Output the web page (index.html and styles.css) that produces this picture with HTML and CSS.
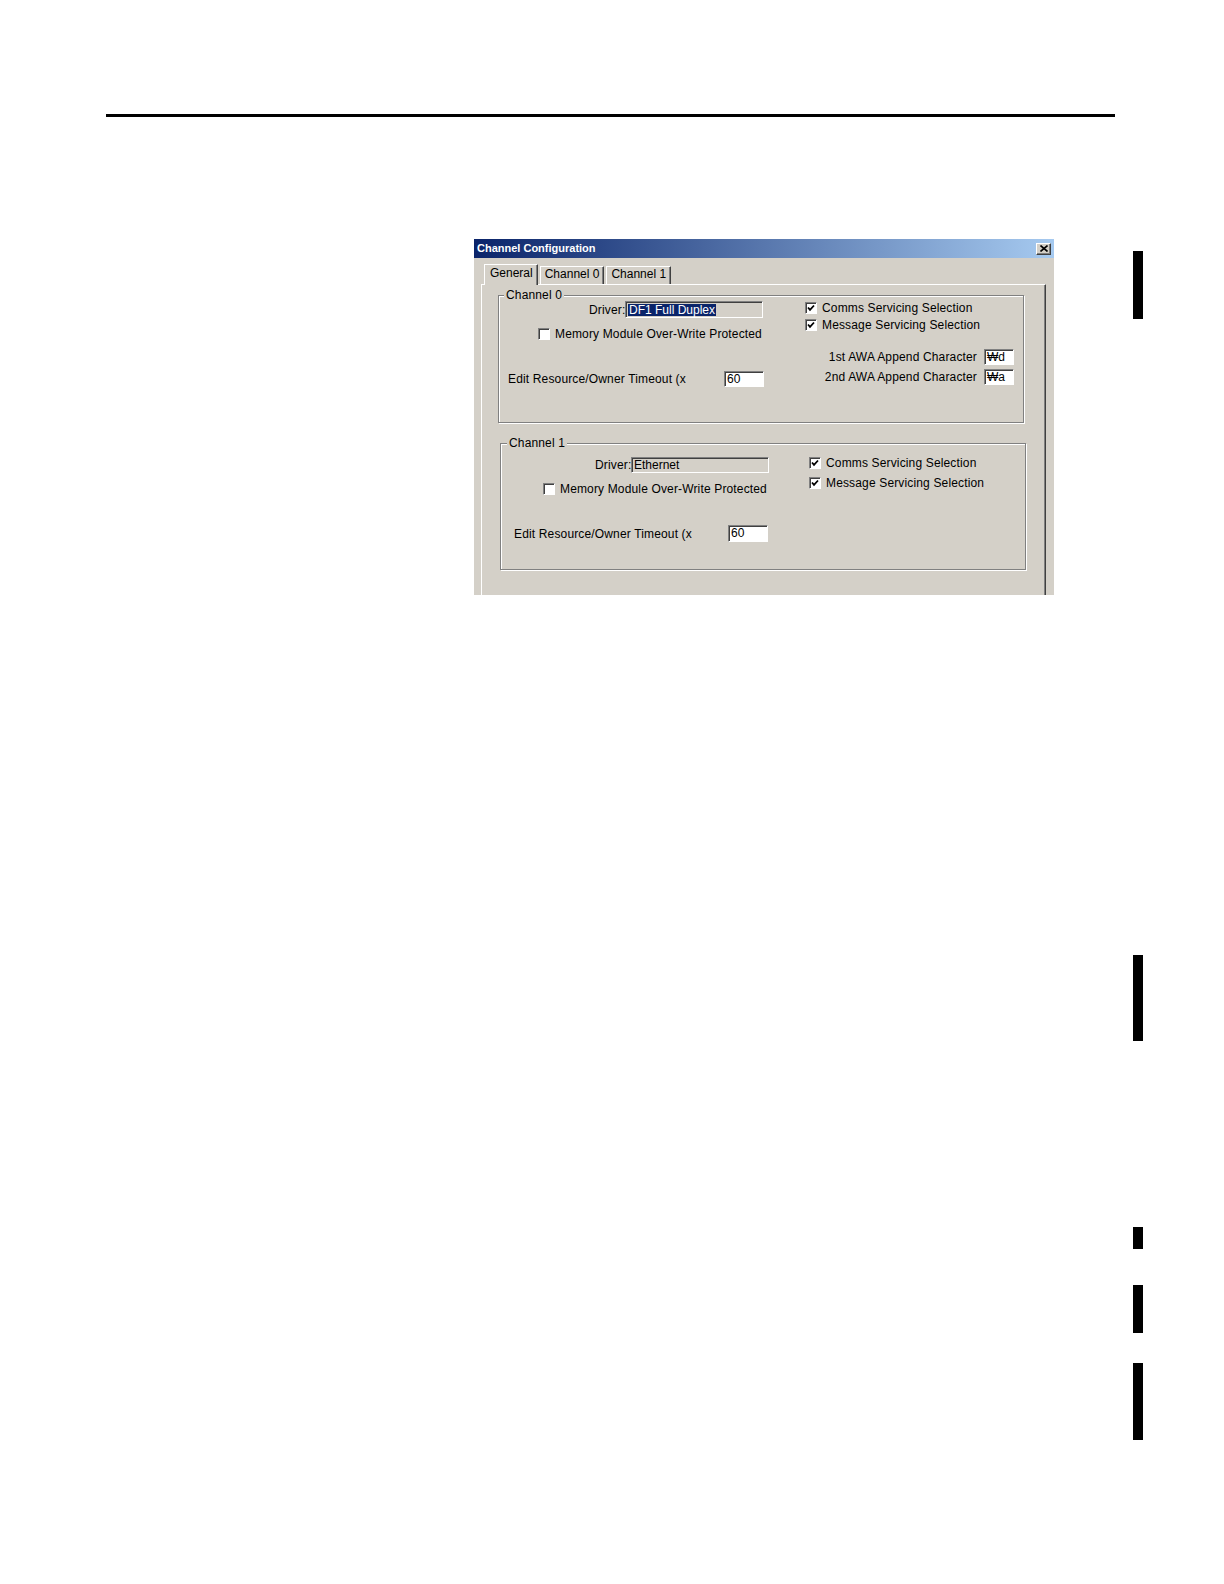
FILE: index.html
```html
<!DOCTYPE html>
<html>
<head>
<meta charset="utf-8">
<title>Channel Configuration</title>
<link rel="stylesheet" href="styles.css">
</head>
<body>
<div class="page">
  <div class="main">
    <div class="rule"></div>
    <div class="figure">
      <div class="dialog">
        <div class="titlebar">
          <span class="title">Channel Configuration</span>
          <span class="close-btn">
            <svg width="8" height="7" viewBox="0 0 8 7"><path d="M0.5 0.5 L7.5 6.5 M7.5 0.5 L0.5 6.5" stroke="#000" stroke-width="1.6" fill="none"/></svg>
          </span>
        </div>
        <div class="dialog-body">
          <div class="tabs">
            <div class="tab tab-active">General</div>
            <div class="tab tab-ch0">Channel 0</div>
            <div class="tab tab-ch1">Channel 1</div>
          </div>
          <div class="panel">
            <div class="group group-ch0">
              <span class="group-label">Channel 0</span>
              <div class="group-grid">
                <div class="col-left">
                  <div class="row driver-row">
                    <span class="lbl">Driver:</span>
                    <span class="field field-driver field-disabled"><span class="sel">DF1 Full Duplex</span></span>
                  </div>
                  <div class="row mem-row">
                    <span class="chk"></span>
                    <span class="chk-text">Memory Module Over-Write Protected</span>
                  </div>
                  <div class="row edit-row">
                    <span class="edit-lbl">Edit Resource/Owner Timeout (x</span>
                    <span class="field field-timeout">60</span>
                  </div>
                </div>
                <div class="col-right">
                  <div class="row comms-row">
                    <span class="chk"><svg width="8" height="8" viewBox="0 0 8 8"><path d="M1 3.5 L3 5.8 L7 1.5" stroke="#000" stroke-width="1.8" fill="none"/></svg></span>
                    <span class="chk-text">Comms Servicing Selection</span>
                  </div>
                  <div class="row msg-row">
                    <span class="chk"><svg width="8" height="8" viewBox="0 0 8 8"><path d="M1 3.5 L3 5.8 L7 1.5" stroke="#000" stroke-width="1.8" fill="none"/></svg></span>
                    <span class="chk-text">Message Servicing Selection</span>
                  </div>
                  <div class="row awa-row awa-1">
                    <span class="awa-lbl">1st AWA Append Character</span>
                    <span class="field field-awa">₩d</span>
                  </div>
                  <div class="row awa-row awa-2">
                    <span class="awa-lbl">2nd AWA Append Character</span>
                    <span class="field field-awa">₩a</span>
                  </div>
                </div>
              </div>
            </div>
            <div class="group group-ch1">
              <span class="group-label">Channel 1</span>
              <div class="group-grid">
                <div class="col-left">
                  <div class="row driver-row">
                    <span class="lbl">Driver:</span>
                    <span class="field field-driver field-disabled">Ethernet</span>
                  </div>
                  <div class="row mem-row">
                    <span class="chk"></span>
                    <span class="chk-text">Memory Module Over-Write Protected</span>
                  </div>
                  <div class="row edit-row">
                    <span class="edit-lbl">Edit Resource/Owner Timeout (x</span>
                    <span class="field field-timeout">60</span>
                  </div>
                </div>
                <div class="col-right">
                  <div class="row comms-row">
                    <span class="chk"><svg width="8" height="8" viewBox="0 0 8 8"><path d="M1 3.5 L3 5.8 L7 1.5" stroke="#000" stroke-width="1.8" fill="none"/></svg></span>
                    <span class="chk-text">Comms Servicing Selection</span>
                  </div>
                  <div class="row msg-row">
                    <span class="chk"><svg width="8" height="8" viewBox="0 0 8 8"><path d="M1 3.5 L3 5.8 L7 1.5" stroke="#000" stroke-width="1.8" fill="none"/></svg></span>
                    <span class="chk-text">Message Servicing Selection</span>
                  </div>
                </div>
              </div>
            </div>
          </div>
        </div>
      </div>
    </div>
  </div>
  <div class="thumbs">
    <div class="thumb thumb-1"></div>
    <div class="thumb thumb-2"></div>
    <div class="thumb thumb-3"></div>
    <div class="thumb thumb-4"></div>
    <div class="thumb thumb-5"></div>
  </div>
</div>
</body>
</html>
```

FILE: styles.css
```css
* { box-sizing: border-box; }

body {
  margin: 0;
  background: #fff;
}

.page {
  display: grid;
  grid-template-columns: 1133px 10px;
  width: 1224px;
  min-height: 1584px;
  font-family: "Liberation Sans", Arial, "DejaVu Sans", sans-serif;
}

.main { padding-top: 114px; }

.rule {
  margin-left: 106px;
  width: 1009px;
  height: 3px;
  background: #000;
}

.figure {
  margin: 122px 0 0 474px;
  width: 580px;
}

.dialog {
  width: 580px;
  height: 356px;
  background: #d4d0c8;
  overflow: hidden;
  font-size: 12px;
  letter-spacing: 0.15px;
  color: #000;
}

.titlebar {
  height: 19px;
  display: flex;
  align-items: center;
  justify-content: space-between;
  padding: 0 3px 0 3px;
  background: linear-gradient(to right, #0a246a, #a6caf0);
}

.title {
  color: #fff;
  font-weight: bold;
  font-size: 11px;
  letter-spacing: 0;
  line-height: 19px;
}

.close-btn {
  width: 15px;
  height: 12px;
  background: #d4d0c8;
  border-top: 1px solid #fff;
  border-left: 1px solid #fff;
  border-right: 1px solid #404040;
  border-bottom: 1px solid #404040;
  box-shadow: inset -1px -1px 0 #808080;
  display: flex;
  align-items: center;
  justify-content: center;
}

.dialog-body { padding: 6px 8px 0 7px; }

.tabs {
  display: flex;
  align-items: flex-end;
  height: 20px;
  padding-left: 3px;
  position: relative;
  z-index: 1;
}

.tab {
  height: 18px;
  line-height: 15px;
  padding: 0 4px;
  border-top: 1px solid #fff;
  border-left: 1px solid #fff;
  border-right: 1px solid #404040;
  box-shadow: inset -1px 0 0 #808080;
  background: #d4d0c8;
  white-space: nowrap;
  letter-spacing: 0;
}

.tab-active {
  height: 21px;
  margin-bottom: -1px;
  padding: 0 4px 0 5px;
  line-height: 17px;
}

.tab-ch0 { margin-left: 2px; }
.tab-ch1 { margin-left: 2px; }

.panel {
  height: 330px;
  border-top: 1px solid #fff;
  border-left: 1px solid #fff;
  border-right: 1px solid #404040;
  box-shadow: inset -1px 0 0 #808080;
  padding-top: 10px;
}

.group {
  position: relative;
  border: 1px solid #808080;
  box-shadow: inset 1px 1px 0 #fff, 1px 1px 0 #fff;
}

.group-ch0 {
  margin-left: 16px;
  width: 526px;
  height: 128px;
}

.group-ch1 {
  margin-left: 18px;
  margin-top: 20px;
  width: 526px;
  height: 127px;
}

.group-label {
  position: absolute;
  top: -8px;
  background: #d4d0c8;
  padding: 0 2px;
  line-height: 14px;
  white-space: nowrap;
}

.group-ch0 .group-label { left: 5px; }
.group-ch1 .group-label { left: 6px; }

.group-grid { display: grid; }
.group-ch0 .group-grid { grid-template-columns: 306px 1fr; }
.group-ch1 .group-grid { grid-template-columns: 308px 1fr; }

.row {
  display: flex;
  align-items: center;
  white-space: nowrap;
}

.lbl { width: 36px; }

.field {
  display: flex;
  align-items: center;
  border-top: 1px solid #808080;
  border-left: 1px solid #808080;
  border-bottom: 1px solid #fff;
  border-right: 1px solid #fff;
  box-shadow: inset 1px 1px 0 #404040;
  background: #fff;
  padding-left: 2px;
  line-height: 13px;
  letter-spacing: 0;
}

.field-disabled { background: #d4d0c8; }
.field-driver { width: 138px; }
.field-timeout { width: 40px; }
.field-awa { width: 30px; height: 16px; }

.sel {
  background: #0a246a;
  color: #fff;
  line-height: 12px;
  padding: 0 1px;
}

.chk {
  width: 12px;
  height: 12px;
  flex: none;
  background: #fff;
  border-top: 1px solid #808080;
  border-left: 1px solid #808080;
  border-bottom: 1px solid #fff;
  border-right: 1px solid #fff;
  box-shadow: inset 1px 1px 0 #404040;
  display: flex;
  align-items: center;
  justify-content: center;
}

.chk-text { margin-left: 5px; }

.mem-row, .comms-row, .msg-row { height: 12px; }

.awa-row {
  justify-content: flex-end;
  height: 16px;
  padding-right: 9px;
}

.awa-lbl { margin-right: 7px; }

/* Channel 0 group placement */
.group-ch0 .col-left { padding-left: 9px; }
.group-ch0 .driver-row { margin: 5px 0 0 81px; height: 17px; }
.group-ch0 .driver-row .field { height: 17px; }
.group-ch0 .mem-row { margin: 10px 0 0 30px; }
.group-ch0 .edit-row { margin-top: 31px; height: 16px; }
.group-ch0 .edit-lbl { width: 216px; }
.group-ch0 .field-timeout { height: 16px; }
.group-ch0 .comms-row { margin-top: 6px; }
.group-ch0 .msg-row { margin-top: 5px; }
.group-ch0 .awa-1 { margin-top: 18px; }
.group-ch0 .awa-2 { margin-top: 4px; }

/* Channel 1 group placement */
.group-ch1 .col-left { padding-left: 13px; }
.group-ch1 .driver-row { margin: 13px 0 0 81px; height: 16px; }
.group-ch1 .driver-row .field { height: 16px; }
.group-ch1 .mem-row { margin: 10px 0 0 29px; }
.group-ch1 .edit-row { margin-top: 30px; height: 17px; }
.group-ch1 .edit-lbl { width: 214px; }
.group-ch1 .field-timeout { height: 17px; }
.group-ch1 .comms-row { margin-top: 13px; }
.group-ch1 .msg-row { margin-top: 8px; }

.thumbs {
  display: flex;
  flex-direction: column;
}

.thumb {
  width: 10px;
  background: #000;
}

.thumb-1 { margin-top: 251px; height: 68px; }
.thumb-2 { margin-top: 636px; height: 86px; }
.thumb-3 { margin-top: 186px; height: 22px; }
.thumb-4 { margin-top: 36px; height: 48px; }
.thumb-5 { margin-top: 30px; height: 77px; }
```
